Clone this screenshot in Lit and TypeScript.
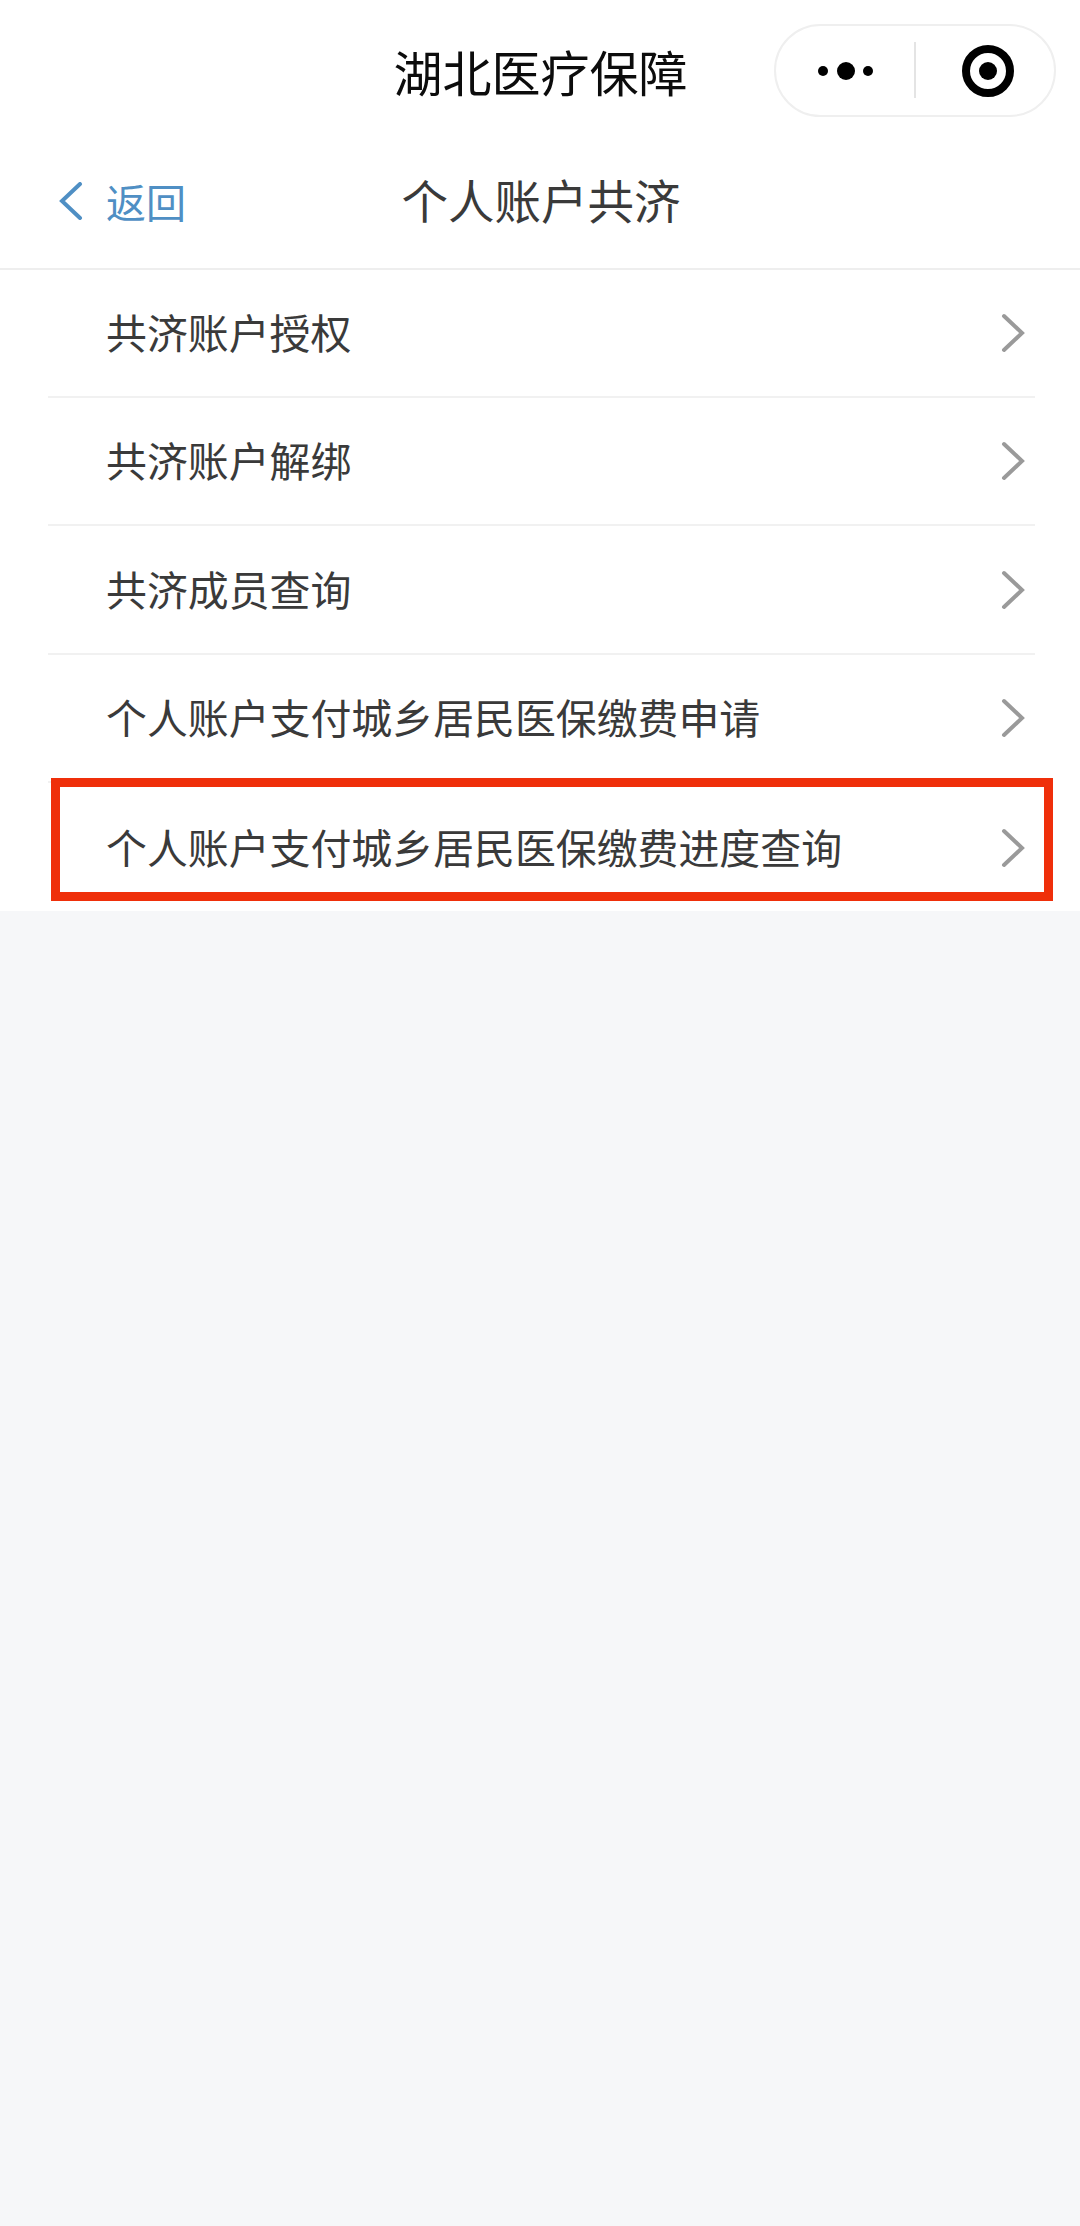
import { LitElement, html, css, svg } from "lit";
import { customElement } from "lit/decorators.js";

const ITEMS = [
  "共济账户授权",
  "共济账户解绑",
  "共济成员查询",
  "个人账户支付城乡居民医保缴费申请",
  "个人账户支付城乡居民医保缴费进度查询",
];

@customElement("app-root")
export class AppRoot extends LitElement {
  static styles = css`
    :host {
      display: block;
      width: 1080px;
      height: 2226px;
      background: #f6f7f9;
      font-family: "Noto Sans CJK SC", "Liberation Sans", sans-serif;
      overflow: hidden;
    }
    .header {
      height: 268px;
      background: #fff;
      border-bottom: 2px solid #eeeeee;
      display: flex;
      flex-direction: column;
    }
    .wx-bar {
      position: relative;
      height: 140px;
      display: flex;
      align-items: center;
      justify-content: center;
    }
    .wx-title {
      font-size: 49px;
      line-height: 60px;
      color: #0c0c0c;
      font-weight: 400;
      margin-top: 2px;
      margin-left: 1px;
    }
    .capsule {
      position: absolute;
      left: 774px;
      top: 24px;
      width: 282px;
      height: 93px;
      box-sizing: border-box;
      border: 2px solid #efefef;
      border-radius: 47px;
      background: #fff;
    }
    .capsule svg {
      display: block;
    }
    .page-bar {
      position: relative;
      flex: 1;
      display: flex;
      align-items: center;
      justify-content: center;
    }
    .page-title {
      font-size: 46.5px;
      line-height: 60px;
      color: #3a3a3a;
      margin-top: -10px;
      margin-left: 2px;
    }
    .back {
      position: absolute;
      left: 59px;
      top: 39px;
      display: flex;
      align-items: center;
      gap: 23px;
      color: #4f8fc4;
      font-size: 40px;
      line-height: 44px;
    }
    .back svg {
      display: block;
    }
    .list {
      background: #fff;
      height: 641px;
    }
    .row {
      position: relative;
      box-sizing: border-box;
      height: 128.5px;
      margin: 0 45px 0 48px;
      padding: 0 10px 0 58px;
      display: flex;
      align-items: center;
      justify-content: space-between;
      border-bottom: 2px solid #f1f1f1;
      font-size: 40.9px;
      color: #3a3a3a;
    }
    .row:first-child {
      height: 127.5px;
    }
    .row:last-child {
      border-bottom: none;
    }
    .row span {
      margin-top: -2px;
    }
    .row svg {
      display: block;
      margin-top: 1px;
    }
    .mark {
      position: absolute;
      left: 3px;
      right: -18px;
      top: -5px;
      height: 123px;
      box-sizing: border-box;
      border: 9px solid #ef2f0a;
    }
  `;

  private chevron() {
    return html`<svg width="24" height="40" viewBox="0 0 24 40" fill="none">
      <path d="M3 3 L21 20 L3 37" stroke="#9a9a9a" stroke-width="4" stroke-linecap="round" stroke-linejoin="miter"/>
    </svg>`;
  }

  render() {
    return html`
      <div class="header">
        <div class="wx-bar">
          <div class="wx-title">湖北医疗保障</div>
          <div class="capsule">
            <svg width="278" height="89" viewBox="0 0 278 89">
              ${svg`
                <circle cx="47" cy="45" r="5" fill="#000"/>
                <circle cx="70" cy="45" r="9" fill="#000"/>
                <circle cx="92" cy="45" r="5" fill="#000"/>
                <rect x="138" y="16" width="2" height="56" fill="#e4e4e4"/>
                <circle cx="212" cy="45" r="22" fill="none" stroke="#000" stroke-width="8"/>
                <circle cx="212" cy="45" r="9" fill="#000"/>
              `}
            </svg>
          </div>
        </div>
        <div class="page-bar">
          <div class="back">
            <svg width="24" height="38" viewBox="0 0 24 38" fill="none">
              <path d="M21 2 L3 19 L21 36" stroke="#4f8fc4" stroke-width="4" stroke-linecap="round"/>
            </svg>
            <span>返回</span>
          </div>
          <div class="page-title">个人账户共济</div>
        </div>
      </div>
      <div class="list">
        ${ITEMS.map(
          (t, i) => html`<div class="row">
            <span>${t}</span>
            ${this.chevron()}
            ${i === ITEMS.length - 1 ? html`<div class="mark"></div>` : ""}
          </div>`
        )}
      </div>
    `;
  }
}
